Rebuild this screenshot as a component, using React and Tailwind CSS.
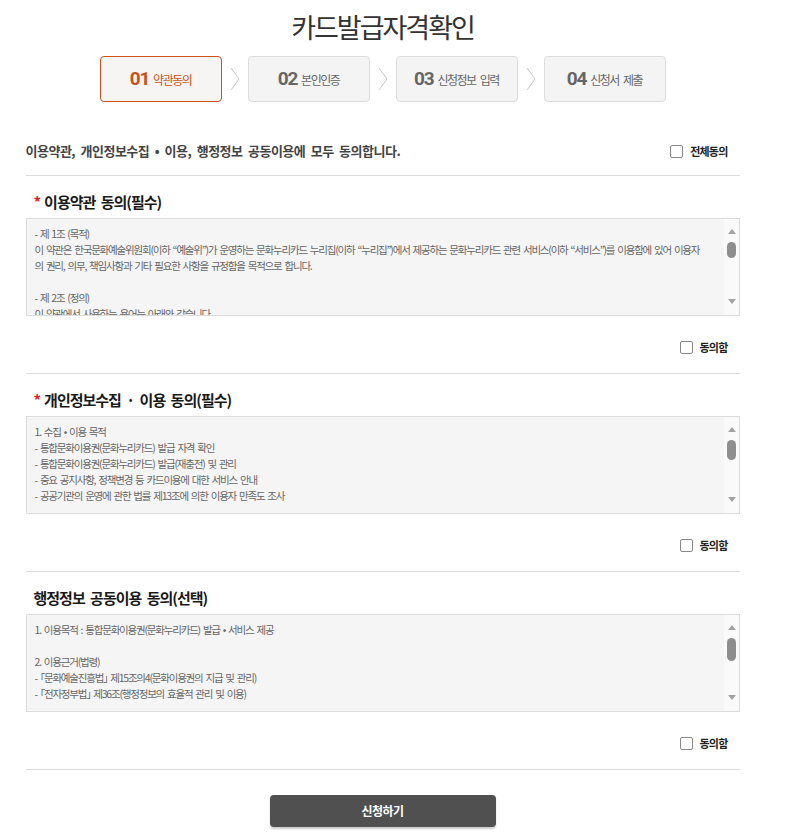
import React from "react";

function Step({ num, label, active }) {
  return (
    <div
      className={
        active
          ? "w-[122px] h-[46px] rounded-[4px] border border-[#c9521a] bg-[#f6f5f4] flex items-center justify-center gap-[4px] text-[#c9521a]"
          : "w-[122px] h-[46px] rounded-[4px] border border-[#dcdcdc] bg-[#f4f4f4] flex items-center justify-center gap-[4px] text-[#666]"
      }
    >
      <span className="text-[19px] font-bold tracking-[-1.2px] font-['Roboto',sans-serif]">{num}</span>
      <span className="text-[12px] tracking-[-1.5px] [word-spacing:3px] pt-[1px]">{label}</span>
    </div>
  );
}

function Chevron() {
  return (
    <svg width="26" height="46" viewBox="0 0 26 46" className="shrink-0">
      <polyline points="9,12 17,23 9,34" fill="none" stroke="#c8c8c8" strokeWidth="1" />
    </svg>
  );
}

function Box({ lines, thumbH, halt }) {
  return (
    <div className="h-[98px] border border-[#dcdcdc] bg-[#f5f5f5] flex overflow-hidden">
      <div
        className={
          halt
            ? "flex-1 pl-[8px] pt-[7px] text-[10.5px] leading-[16px] text-[#666] tracking-[-1.2px] [word-spacing:1.8px] overflow-hidden [font-feature-settings:'halt']"
            : "flex-1 pl-[8px] pt-[7px] text-[10.5px] leading-[16px] text-[#666] tracking-[-1.2px] [word-spacing:1.8px] overflow-hidden"
        }
      >
        {lines.map((l, i) => (
          <div key={i} className="whitespace-nowrap h-[16px]">
            {l}
          </div>
        ))}
      </div>
      <div className="w-[15px] bg-[#fafafa] relative shrink-0">
        <svg width="8" height="5" viewBox="0 0 8 5" className="absolute left-[4px] top-[10px]">
          <polygon points="4,0 8,5 0,5" fill="#a3a3a3" />
        </svg>
        <div className="absolute left-[3px] top-[23px] w-[9px] rounded-full bg-[#8e8e8e]" style={{ height: thumbH }} />
        <svg width="8" height="5" viewBox="0 0 8 5" className="absolute left-[4px] top-[80px]">
          <polygon points="0,0 8,0 4,5" fill="#a3a3a3" />
        </svg>
      </div>
    </div>
  );
}

function Check({ label }) {
  return (
    <div className="flex items-center gap-[7px]">
      <div className="w-[13px] h-[13px] border border-[#888] rounded-[2px] bg-white" />
      <span className="text-[11px] font-bold text-[#222] tracking-[-0.8px]">{label}</span>
    </div>
  );
}

function Section({ title, required, lines, thumbH, halt }) {
  return (
    <div className="border-b border-[#dcdcdc]">
      <div className="pt-[16px] h-[42px] pl-[8px] flex items-start">
        <div className="flex items-center h-[20px] text-[15px] font-bold text-[#1a1a1a] tracking-[-1px] [word-spacing:3px]">
          {required && <span className="text-[#e3231b] mr-[4px] text-[15px]">*</span>}
          <span>{title}</span>
        </div>
      </div>
      <Box lines={lines} thumbH={thumbH} halt={halt} />
      <div className="h-[57px] pt-[6px] flex items-center justify-end pr-[12px]">
        <Check label="동의함" />
      </div>
    </div>
  );
}

export default function App() {
  return (
    <div className="w-[765px] bg-white font-['Noto_Sans_CJK_KR',sans-serif] pb-[10px]">
      <div className="pt-[10px] text-center text-[27px] leading-[34px] text-[#333] tracking-[-2px]">
        카드발급자격확인
      </div>
      <div className="mt-[12px] flex justify-center">
        <Step num="01" label="약관동의" active />
        <Chevron />
        <Step num="02" label="본인인증" />
        <Chevron />
        <Step num="03" label="신청정보 입력" />
        <Chevron />
        <Step num="04" label="신청서 제출" />
      </div>
      <div className="mx-auto w-[714px]">
        <div className="border-b border-[#dcdcdc] pt-[39px] pb-[14px] flex items-center justify-between">
          <div className="h-[20px] flex items-center text-[13px] font-bold text-[#444] tracking-[-0.5px] [word-spacing:3px]">
            이용약관, 개인정보수집 • 이용, 행정정보 공동이용에 모두 동의합니다.
          </div>
          <div className="pr-[12px]">
            <Check label="전체동의" />
          </div>
        </div>
        <Section
          title="이용약관 동의(필수)"
          required
          thumbH={16}
          lines={[
            "- 제 1조 (목적)",
            "이 약관은 한국문화예술위원회(이하 “예술위”)가 운영하는 문화누리카드 누리집(이하 “누리집”)에서 제공하는 문화누리카드 관련 서비스(이하 “서비스”)를 이용함에 있어 이용자",
            "의 권리, 의무, 책임사항과 기타 필요한 사항을 규정함을 목적으로 합니다.",
            "\u00a0",
            "- 제 2조 (정의)",
            "이 약관에서 사용하는 용어는 아래와 같습니다.",
          ]}
        />
        <Section
          title="개인정보수집 · 이용 동의(필수)"
          required
          thumbH={20}
          lines={[
            "1. 수집 • 이용 목적",
            "- 통합문화이용권(문화누리카드) 발급 자격 확인",
            "- 통합문화이용권(문화누리카드) 발급(재충전) 및 관리",
            "- 중요 공지사항, 정책변경 등 카드이용에 대한 서비스 안내",
            "- 공공기관의 운영에 관한 법률 제13조에 의한 이용자 만족도 조사",
          ]}
        />
        <Section
          title="행정정보 공동이용 동의(선택)"
          thumbH={23}
          halt
          lines={[
            "1. 이용목적 : 통합문화이용권(문화누리카드) 발급 • 서비스 제공",
            "\u00a0",
            "2. 이용근거(법령)",
            "- 「문화예술진흥법」 제15조의4(문화이용권의 지급 및 관리)",
            "- 「전자정부법」 제36조(행정정보의 효율적 관리 및 이용)",
          ]}
        />
        <div className="mt-[25px] flex justify-center">
          <button className="w-[226px] h-[32px] rounded-[4px] bg-[#505050] text-white text-[12px] font-bold tracking-[-0.6px] shadow-[0_2px_2px_rgba(0,0,0,0.2)]">
            신청하기
          </button>
        </div>
      </div>
    </div>
  );
}
